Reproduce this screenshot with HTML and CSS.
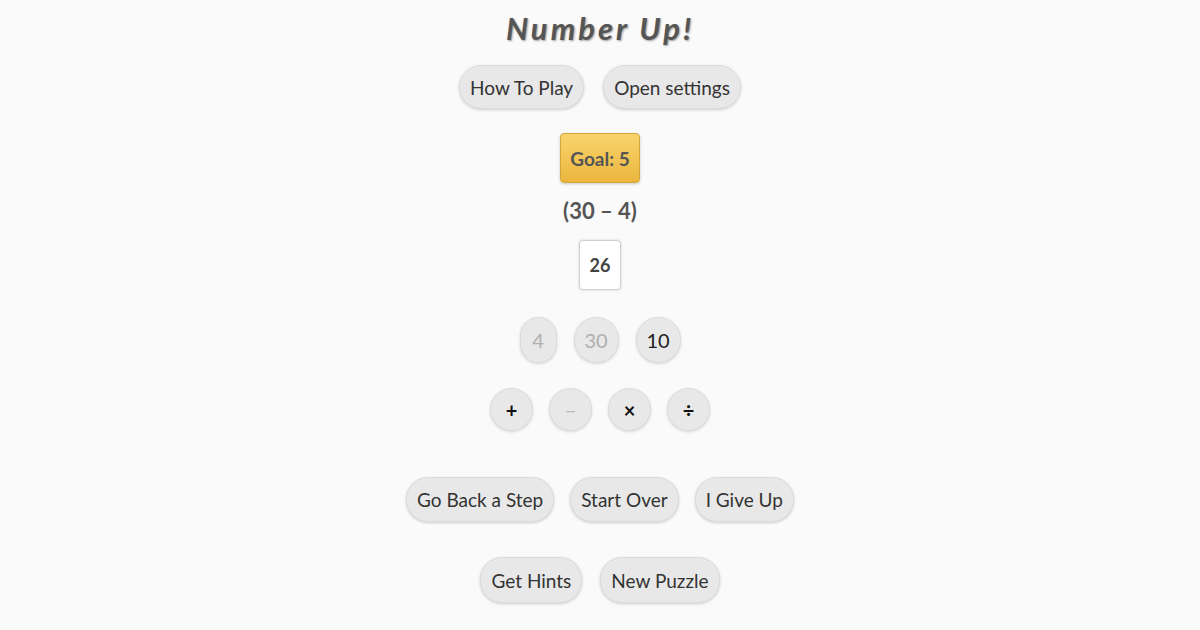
FILE: index.html
```html
<!DOCTYPE html>
<html lang="en">
<head>
<meta charset="utf-8">
<title>Number Up!</title>
<link rel="stylesheet" href="styles.css">
</head>
<body>
<main class="game">
  <h1 class="title">Number Up!</h1>
  <div class="row row-top">
    <button class="pill">How To Play</button>
    <button class="pill">Open settings</button>
  </div>
  <div class="goal">Goal: 5</div>
  <div class="expr">(30 – 4)</div>
  <div class="result">26</div>
  <div class="row row-nums">
    <button class="num num-used num-narrow">4</button>
    <button class="num num-used">30</button>
    <button class="num">10</button>
  </div>
  <div class="row row-ops">
    <button class="op">+</button>
    <button class="op op-off">−</button>
    <button class="op">×</button>
    <button class="op">÷</button>
  </div>
  <div class="row row-actions">
    <button class="pill">Go Back a Step</button>
    <button class="pill">Start Over</button>
    <button class="pill">I Give Up</button>
  </div>
  <div class="row row-more">
    <button class="pill">Get Hints</button>
    <button class="pill">New Puzzle</button>
  </div>
</main>
</body>
</html>
```
FILE: styles.css
```css
html, body {
  margin: 0;
  padding: 0;
  background: #fafafa;
}
body {
  font-family: Lato, "Open Sans", sans-serif;
  color: #333;
  width: 1200px;
  height: 630px;
  overflow: hidden;
}
.game {
  display: flex;
  flex-direction: column;
  align-items: center;
}
.title {
  margin: 10px 0 0;
  font-size: 31px;
  line-height: 36px;
  font-style: italic;
  font-weight: 700;
  letter-spacing: 3px;
  color: #555;
  text-shadow: 1px 1px 2px #999;
}
.row {
  display: flex;
  justify-content: center;
}
button {
  font-family: inherit;
  margin: 0;
  cursor: pointer;
}
.pill {
  height: 44px;
  padding: 0 10px;
  border-radius: 22px;
  border: 1px solid #dcdcdc;
  background: #e8e8e8;
  box-shadow: 0 1px 3px rgba(0,0,0,0.18);
  font-size: 19px;
  color: #333;
}
.row-top { margin-top: 19px; gap: 19px; }
.row-actions { margin-top: 46px; gap: 16px; }
.row-actions .pill { height: 45px; }
.row-more { margin-top: 35px; gap: 18px; }
.row-more .pill { height: 46px; }
.goal {
  margin-top: 24px;
  width: 80px;
  height: 50px;
  box-sizing: border-box;
  display: flex;
  align-items: center;
  justify-content: center;
  border-radius: 4px;
  border: 1px solid #d3a53a;
  background: linear-gradient(#f8d46c, #ebb63e);
  box-shadow: 0 1px 3px rgba(0,0,0,0.2);
  font-size: 19px;
  font-weight: 700;
  color: #555;
}
.expr {
  margin-top: 16px;
  font-size: 22px;
  line-height: 24px;
  font-weight: 700;
  color: #555;
}
.result {
  margin-top: 17px;
  width: 42px;
  height: 50px;
  box-sizing: border-box;
  display: flex;
  align-items: center;
  justify-content: center;
  background: #fff;
  border: 1px solid #d0d0d0;
  border-radius: 4px;
  box-shadow: 0 0 3px rgba(0,0,0,0.15);
  font-size: 18px;
  font-weight: 700;
  color: #444;
}
.row-nums { margin-top: 27px; gap: 17px; }
.num {
  height: 46px;
  min-width: 45px;
  padding: 0 8px;
  border-radius: 23px;
  border: 1px solid #dcdcdc;
  background: #e8e8e8;
  box-shadow: 0 1px 3px rgba(0,0,0,0.15);
  font-size: 20px;
  color: #222;
}
.num-narrow { min-width: 37px; }
.num-used { color: #b0b0b0; }
.row-ops { margin-top: 25px; gap: 16px; }
.op {
  width: 43px;
  height: 43px;
  padding: 0;
  border-radius: 50%;
  border: 1px solid #dcdcdc;
  background: #e8e8e8;
  box-shadow: 0 1px 3px rgba(0,0,0,0.15);
  font-size: 20px;
  font-weight: 700;
  color: #111;
}
.op-off { color: #bbb; font-weight: 400; }
```
